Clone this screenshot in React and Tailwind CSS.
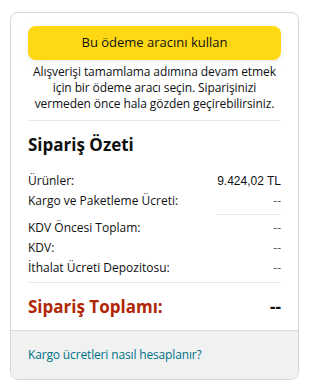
export default function App() {
  const font = { fontFamily: '"Open Sans", "Noto Sans", Arial, sans-serif' };
  return (
    <div className="w-[315px] h-[392px] bg-white pt-[12px] pl-[10px]" style={font}>
      <div className="w-[289px] rounded-[8px] border border-[#d5d9d9] overflow-hidden bg-white">
        <div className="px-[17px] pt-[13px]">
          <button className="w-full h-[34px] rounded-[8px] bg-[#ffd814] text-[13px] text-[#0f1111] shadow-[0_2px_5px_0_rgba(213,217,217,0.5)]">
            Bu ödeme aracını kullan
          </button>
          <p className="mt-[4px] text-center text-[12px] leading-[16px] text-[#0f1111] tracking-[-0.1px]">
            Alışverişi tamamlama adımına devam etmek için bir ödeme aracı seçin. Siparişinizi vermeden önce hala gözden geçirebilirsiniz.
          </p>
          <div className="mt-[8px] border-t border-[#e7e7e7]" />
          <h2 className="mt-[12px] text-[17px] leading-[24px] font-bold text-[#0f1111]">Sipariş Özeti</h2>
          <div className="mt-[14px] text-[12px] leading-[20px] text-[#0f1111]">
            <div className="flex justify-between"><span>Ürünler:</span><span style={{ fontFamily: '"Liberation Sans", Arial, sans-serif' }}>9.424,02 TL</span></div>
            <div className="flex justify-between"><span>Kargo ve Paketleme Ücreti:</span><span className="text-[#565959]">--</span></div>
            <div className="flex justify-end"><div className="w-[64px] border-t border-[#e7e7e7] my-[3px]" /></div>
            <div className="flex justify-between"><span>KDV Öncesi Toplam:</span><span className="text-[#565959]">--</span></div>
            <div className="flex justify-between"><span>KDV:</span><span className="text-[#565959]">--</span></div>
            <div className="flex justify-between"><span>İthalat Ücreti Depozitosu:</span><span className="text-[#565959]">--</span></div>
          </div>
          <div className="mt-[4px] border-t border-[#e7e7e7]" />
          <div className="flex justify-between items-center h-[47px]">
            <span className="text-[17px] font-bold text-[#b12704]">Sipariş Toplamı:</span>
            <span className="text-[17px] font-bold text-[#0f1111]">--</span>
          </div>
        </div>
        <div className="border-t border-[#d5d9d9] bg-[#f0f2f2] h-[49px] px-[17px] flex items-center">
          <span className="text-[12px] tracking-[-0.15px] text-[#007185]">Kargo ücretleri nasıl hesaplanır?</span>
        </div>
      </div>
    </div>
  );
}
